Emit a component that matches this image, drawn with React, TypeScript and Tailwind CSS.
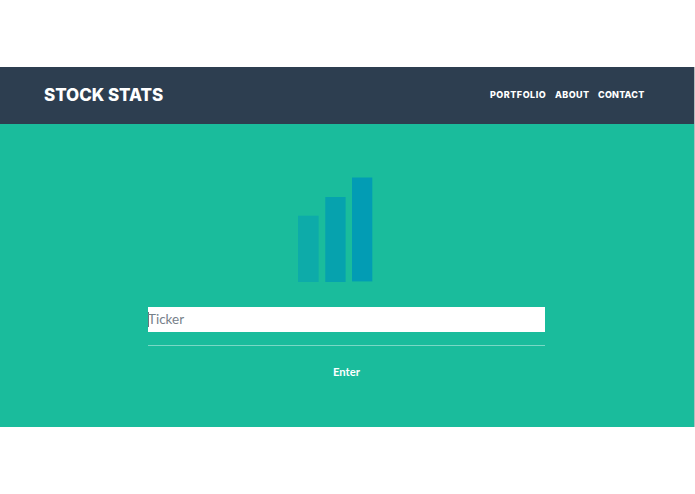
const links = [
  { label: 'PORTFOLIO', style: 'w-[57px] tracking-[0.5px]' },
  { label: 'ABOUT', style: 'w-[35px] tracking-[0.4px]' },
  { label: 'CONTACT', style: 'w-[46px] tracking-[0.2px]' },
];

function BarsLogo() {
  return (
    <svg width="76" height="106" viewBox="0 0 76 106" aria-hidden="true">
      <rect x="1" y="38.7" width="20.6" height="66.3" fill="#0daba9" />
      <rect x="28.3" y="20" width="20.3" height="85" fill="#06a2ae" />
      <rect x="55" y="0.5" width="20.3" height="103.9" fill="#029cb4" />
    </svg>
  );
}

export default function App() {
  return (
    <div className="h-[494px] w-[695px] overflow-hidden bg-white pt-[67px] font-['Lato',sans-serif]">
      <div className="flex h-[360px]">
        <div className="flex w-[694px] flex-col">
          <header className="flex h-[57px] items-center justify-between bg-[#2d3e50] pb-[2px] pl-[44px] pr-[50px] font-['Inter',sans-serif] text-white">
            <h1 className="w-[121px] whitespace-nowrap text-[17px] font-extrabold leading-6 tracking-[-0.05px]">
              STOCK STATS
            </h1>
            <nav className="flex gap-2 text-[9px] font-extrabold leading-4">
              {links.map(({ label, style }) => (
                <a key={label} className={`whitespace-nowrap ${style}`}>{label}</a>
              ))}
            </nav>
          </header>
          <main className="flex flex-1 flex-col bg-[#1abc9c] pl-[148px] pt-[53px]">
            <div className="ml-[149px]">
              <BarsLogo />
            </div>
            <form className="flex w-[397px] flex-col items-center pt-[24px]">
              <div className="flex h-[25px] w-full items-center bg-white text-[13.5px] leading-[25px] text-[#77818a]">
                <span className="-mr-px h-[15px] w-px bg-[#6c757d]" />
                Ticker
              </div>
              <div className="mt-[13px] h-px w-full bg-[#79d8c5]" />
              <button type="button" className="mt-[18px] text-[11.3px] font-bold leading-4 text-white">
                Enter
              </button>
            </form>
          </main>
        </div>
        <div className="w-px bg-[#b5babd]" />
      </div>
    </div>
  );
}
